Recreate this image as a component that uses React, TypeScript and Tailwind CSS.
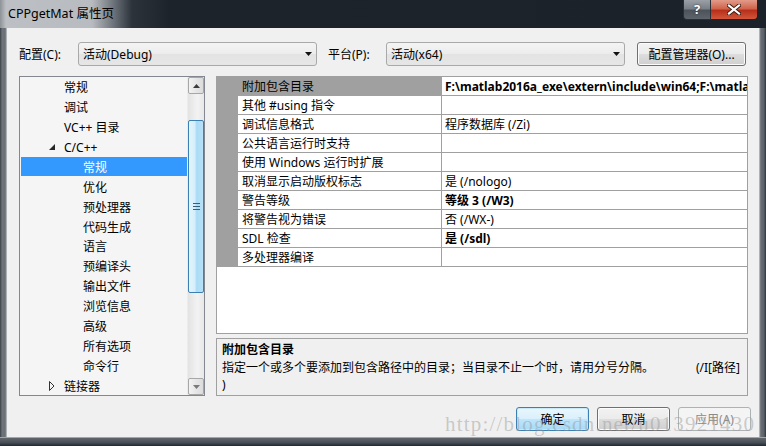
import React from "react";

type TreeItem = { t: string; l: 1 | 2; sel?: boolean; open?: boolean; closed?: boolean };

const treeItems: TreeItem[] = [
  { t: "常规", l: 1 },
  { t: "调试", l: 1 },
  { t: "VC++ 目录", l: 1 },
  { t: "C/C++", l: 1, open: true },
  { t: "常规", l: 2, sel: true },
  { t: "优化", l: 2 },
  { t: "预处理器", l: 2 },
  { t: "代码生成", l: 2 },
  { t: "语言", l: 2 },
  { t: "预编译头", l: 2 },
  { t: "输出文件", l: 2 },
  { t: "浏览信息", l: 2 },
  { t: "高级", l: 2 },
  { t: "所有选项", l: 2 },
  { t: "命令行", l: 2 },
  { t: "链接器", l: 1, closed: true },
];

type Prop = { n: string; v: string; b?: boolean; sel?: boolean };

const props: Prop[] = [
  { n: "附加包含目录", v: "F:\\matlab2016a_exe\\extern\\include\\win64;F:\\matlab2016a_exe\\extern\\include", b: true, sel: true },
  { n: "其他 #using 指令", v: "" },
  { n: "调试信息格式", v: "程序数据库 (/Zi)" },
  { n: "公共语言运行时支持", v: "" },
  { n: "使用 Windows 运行时扩展", v: "" },
  { n: "取消显示启动版权标志", v: "是 (/nologo)" },
  { n: "警告等级", v: "等级 3 (/W3)", b: true },
  { n: "将警告视为错误", v: "否 (/WX-)" },
  { n: "SDL 检查", v: "是 (/sdl)", b: true },
  { n: "多处理器编译", v: "" },
];

function Combo({ text }: { text: string }) {
  return (
    <div className="w-[239px] h-[24px] border border-[#a9a9a9] rounded-[3px] bg-[linear-gradient(#f4f4f4,#ececec_50%,#e3e3e3_51%,#e6e6e6)] flex items-center pl-[4px] pr-[4px]">
      <span className="leading-[16px] pt-[1px]">{text}</span>
      <svg className="ml-auto" width="7" height="4" viewBox="0 0 7 4">
        <path d="M0 0H7L3.5 4Z" fill="#111" />
      </svg>
    </div>
  );
}

function ScrollBtn({ up }: { up?: boolean }) {
  return (
    <div className="h-[17px] w-[16px] border border-[#a7a7a7] rounded-[2px] bg-[linear-gradient(to_right,#f3f3f3,#e6e6e6_50%,#dcdcdc)] flex items-center justify-center">
      <svg width="7" height="4" viewBox="0 0 7 4">
        {up ? <path d="M0 4H7L3.5 0Z" fill="#3c3c3c" /> : <path d="M0 0H7L3.5 4Z" fill="#7a7a7a" />}
      </svg>
    </div>
  );
}

function Btn({ text, def, disabled }: { text: string; def?: boolean; disabled?: boolean }) {
  const cls = def
    ? "border-[#3c7fb1] bg-[linear-gradient(#eaf6fd,#d9f0fc_50%,#bee6fd_51%,#a7d9f5)] shadow-[inset_0_0_0_1px_#c9e9fb]"
    : disabled
    ? "border-[#adb2b5] bg-[#f4f4f4] text-[#8a8a8a]"
    : "border-[#707070] bg-[linear-gradient(#f2f2f2,#ebebeb_50%,#dddddd_51%,#cfcfcf)] shadow-[inset_0_0_0_1px_#fcfcfc]";
  return (
    <div className={`w-[73px] h-[24px] border rounded-[3px] flex items-center justify-center pt-[1px] ${cls}`}>
      {text}
    </div>
  );
}

export default function App() {
  return (
    <div className="w-[766px] h-[446px] relative overflow-hidden bg-[#1d242c] flex flex-col font-['Noto_Sans','Noto_Sans_CJK_SC',sans-serif] text-[12px] text-black">
      {/* title bar */}
      <div className="h-[28px] flex items-start bg-[linear-gradient(to_right,#8d9297_0px,#bcc0c4_6px,#b8bcc0_92px,#6b7179_114px,#2c333b_132px,#1c232b_170px,#1b222a_100%)]">
        <div className="pl-[8px] pt-[5px] text-[12.5px] leading-[18px] text-black">CPPgetMat 属性页</div>
        <div className="ml-auto mr-[8px] flex">
          <div className="w-[28px] h-[20px] border border-[#2a2f35] border-t-0 rounded-bl-[4px] bg-[linear-gradient(#9aa0a6,#7a8087_45%,#4c535b_55%,#5d646c)] flex items-center justify-center text-white font-bold text-[13px] leading-none [text-shadow:0_0_2px_#222]">
            ?
          </div>
          <div className="w-[47px] h-[20px] border border-[#3a1a14] border-t-0 border-l-0 rounded-br-[4px] bg-[linear-gradient(#e39b8a,#d0644c_45%,#b8301a_55%,#d2563a)] flex items-center justify-center">
            <svg width="14" height="11" viewBox="0 0 14 11">
              <path d="M2 1.5L12 9.5M12 1.5L2 9.5" stroke="#3b1a12" strokeWidth="4" strokeLinecap="square" />
              <path d="M2 1.5L12 9.5M12 1.5L2 9.5" stroke="#fff" strokeWidth="2.2" strokeLinecap="square" />
            </svg>
          </div>
        </div>
      </div>

      <div className="flex h-[409px]">
        <div className="w-[7px] bg-[linear-gradient(to_right,#3a4047,#6f747a_30%,#6a6f75_75%,#c9ccd0)]" />
        {/* client area */}
        <div className="w-[752px] bg-[#f0f0f0] flex flex-col">
          {/* config row */}
          <div className="mt-[14px] pl-[12px] flex items-center h-[24px]">
            <div className="w-[59px] pt-[1px]">配置(C):</div>
            <Combo text="活动(Debug)" />
            <div className="ml-[11px] w-[58px] pt-[1px]">平台(P):</div>
            <Combo text="活动(x64)" />
            <div className="ml-[12px] w-[109px] h-[24px] border border-[#707070] rounded-[3px] bg-[linear-gradient(#f2f2f2,#ebebeb_50%,#dddddd_51%,#cfcfcf)] shadow-[inset_0_0_0_1px_#fcfcfc] flex items-center justify-center pt-[1px]">
              配置管理器(O)...
            </div>
          </div>

          {/* main row */}
          <div className="mt-[10px] pl-[12px] flex">
            {/* tree */}
            <div className="w-[186px] h-[320px] border border-[#828790] bg-[#f5f5f5] flex">
              <div className="w-[167px] flex flex-col">
                {treeItems.map((it, i) => (
                  <div
                    key={i}
                    className={`h-[20px] flex items-center relative pt-[3px] ${it.sel ? "bg-[#3399ff] text-white ml-[1px]" : ""} ${it.l === 1 ? "pl-[44px]" : it.sel ? "pl-[62px]" : "pl-[63px]"}`}
                  >
                    {it.open && (
                      <svg className="absolute left-[29px] top-[7px]" width="6" height="6" viewBox="0 0 6 6">
                        <path d="M6 0V6H0Z" fill="#262626" />
                      </svg>
                    )}
                    {it.closed && (
                      <svg className="absolute left-[29px] top-[6px]" width="6" height="10" viewBox="0 0 6 10">
                        <path d="M0.5 0.5L5 5L0.5 9.5Z" fill="none" stroke="#333" strokeWidth="1" />
                      </svg>
                    )}
                    <span className="leading-[16px]">{it.t}</span>
                  </div>
                ))}
              </div>
              {/* scrollbar */}
              <div className="w-[17px] flex flex-col bg-[linear-gradient(to_right,#e3e3e3,#eeeeee_40%,#f2f2f2_60%,#e8e8e8)] border-l border-[#ececec]">
                <ScrollBtn up />
                <div className="h-[26px]" />
                <div className="h-[173px] w-[16px] border border-[#3c7fb1] rounded-[2px] bg-[linear-gradient(to_right,#e3f4fc,#d6effc_40%,#a9dbf6_55%,#b8e2f8)] flex items-center justify-center">
                  <svg width="7" height="7" viewBox="0 0 7 7">
                    <path d="M0 0.5H7M0 3.5H7M0 6.5H7" stroke="#3c5d78" strokeWidth="1" />
                  </svg>
                </div>
                <div className="flex-1" />
                <ScrollBtn />
              </div>
            </div>

            {/* right column */}
            <div className="ml-[11px] w-[532px] flex flex-col">
              <div className="h-[258px] border border-[#a0a0a0] bg-white flex flex-col">
                {props.map((p, i) => (
                  <div key={i} className="h-[19px] flex">
                    <div className="w-[21px] bg-[#a0a0a0]" />
                    <div
                      className={`w-[204px] border-b border-r border-[#a0a0a0] pl-[4px] pt-[2px] flex items-center whitespace-nowrap overflow-hidden ${p.sel ? "bg-[#a0a0a0]" : ""}`}
                    >
                      {p.n}
                    </div>
                    <div
                      className={`flex-1 min-w-0 border-b border-[#a0a0a0] pl-[3px] pt-[2px] flex items-center whitespace-nowrap overflow-hidden ${p.b ? "font-bold" : ""}`}
                    >
                      {p.v}
                    </div>
                  </div>
                ))}
              </div>
              <div className="mt-[4px] h-[58px] border border-[#a0a0a0] bg-[#f0f0f0] pl-[5px] pr-[7px] pt-[1px]">
                <div className="font-bold leading-[19px]">附加包含目录</div>
                <div className="flex leading-[17px]">
                  <span>指定一个或多个要添加到包含路径中的目录；当目录不止一个时，请用分号分隔。</span>
                  <span className="ml-auto">(/I[路径]</span>
                </div>
                <div className="leading-[17px]">)</div>
              </div>
            </div>
          </div>

          {/* buttons */}
          <div className="mt-[11px] pr-[8px] flex justify-end gap-[8px]">
            <Btn text="确定" def />
            <Btn text="取消" />
            <Btn text="应用(A)" disabled />
          </div>
        </div>
        <div className="w-[7px] bg-[linear-gradient(to_right,#c9ccd0,#6a6f75_25%,#5d6268_70%,#2f353c)]" />
      </div>
      <div className="h-[9px] bg-[linear-gradient(#c9ccd0,#5f646a_15%,#4a5057_60%,#22282f)]" />

      {/* watermark */}
      <div className="absolute left-[445px] top-[412px] font-['Liberation_Serif',serif] text-[21px] leading-[24px] tracking-[1.2px] text-[rgba(150,150,150,0.45)] pointer-events-none">
        http://blog.csdn.net/u013921430
      </div>
    </div>
  );
}
